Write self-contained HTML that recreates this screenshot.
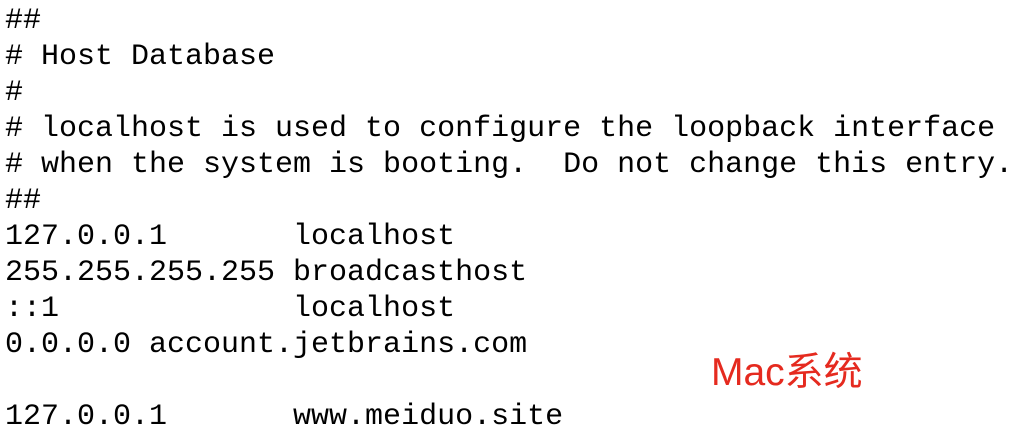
<!DOCTYPE html>
<html><head><meta charset="utf-8"><style>
html,body{margin:0;padding:0;background:#fff;width:1009px;height:432px;overflow:hidden}
pre{position:absolute;left:5px;top:3px;margin:0;font-family:"Liberation Mono",monospace;font-size:30px;line-height:36px;color:#000}
.m{position:absolute;left:711px;top:349px;font-family:"Liberation Sans","Noto Sans CJK SC",sans-serif;font-size:39px;line-height:48px;color:#e52a1f}
</style></head><body>
<pre>##
# Host Database
#
# localhost is used to configure the loopback interface
# when the system is booting.  Do not change this entry.
##
127.0.0.1       localhost
255.255.255.255 broadcasthost
::1             localhost
0.0.0.0 account.jetbrains.com

127.0.0.1       www.meiduo.site</pre>
<div class="m">Mac系统</div>
</body></html>
